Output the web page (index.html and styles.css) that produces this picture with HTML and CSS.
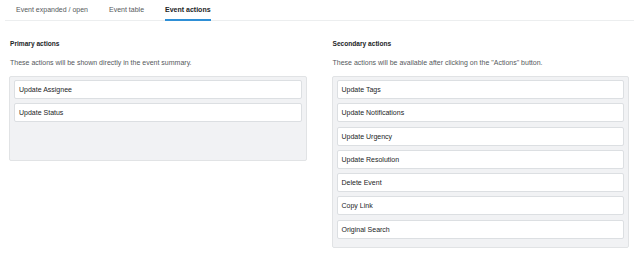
FILE: index.html
```html
<!DOCTYPE html>
<html lang="en">
<head>
    <meta charset="UTF-8">
    <meta name="viewport" content="width=device-width, initial-scale=1.0">
    <title>Event actions</title>
    <link rel="stylesheet" href="styles.css">
</head>
<body>
    <nav class="tabs">
        <a class="tab">Event expanded / open</a>
        <a class="tab">Event table</a>
        <a class="tab active">Event actions</a>
    </nav>

    <div class="columns">
        <section class="action-group">
            <h2>Primary actions</h2>
            <p class="hint">These actions will be shown directly in the event summary.</p>
            <div class="action-list primary">
                <div class="action-item">Update Assignee</div>
                <div class="action-item">Update Status</div>
            </div>
        </section>

        <section class="action-group">
            <h2>Secondary actions</h2>
            <p class="hint">These actions will be available after clicking on the "Actions" button.</p>
            <div class="action-list">
                <div class="action-item">Update Tags</div>
                <div class="action-item">Update Notifications</div>
                <div class="action-item">Update Urgency</div>
                <div class="action-item">Update Resolution</div>
                <div class="action-item">Delete Event</div>
                <div class="action-item">Copy Link</div>
                <div class="action-item">Original Search</div>
            </div>
        </section>
    </div>
</body>
</html>
```

FILE: styles.css
```css
:root {
    --text-color: #222426;
    --muted-color: #55595d;
    --border-color: #e1e3e5;
    --panel-color: #f1f2f4;
    --accent-color: #2e8fd6;
}

body {
    font-family: 'Liberation Sans', Arial, sans-serif;
    font-size: 7px;
    color: var(--text-color);
    margin: 0;
    background: white;
}

.tabs {
    display: flex;
    margin: 0 6px 0 5px;
    border-bottom: 1px solid #eceeef;
    height: 20px;
}

.tab {
    margin: 0 10px 0 11px;
    line-height: 19px;
    height: 19px;
    color: var(--muted-color);
    border-bottom: 2px solid transparent;
    margin-bottom: -1px;
}

.tab.active {
    color: var(--text-color);
    font-weight: bold;
    border-bottom-color: var(--accent-color);
}

.columns {
    display: grid;
    grid-template-columns: 1fr 1fr;
    gap: 25px;
    padding: 0 11px 0 9px;
}

.action-group h2 {
    font-size: 6.6px;
    font-weight: bold;
    margin: 18px 0 0 1px;
    line-height: 9px;
}

.hint {
    color: var(--muted-color);
    margin: 10px 0 0 1px;
    line-height: 9px;
}

.action-list {
    margin-top: 9px;
    background: var(--panel-color);
    border: 1px solid var(--border-color);
    border-radius: 2px;
    padding: 3px 4px 4px;
}

.action-list.primary {
    min-height: 76px;
}

.action-item {
    background: white;
    border: 1px solid #dcdfe2;
    border-radius: 2px;
    height: 17px;
    line-height: 17px;
    padding: 0 4px;
    margin-bottom: 4.3px;
}
```
